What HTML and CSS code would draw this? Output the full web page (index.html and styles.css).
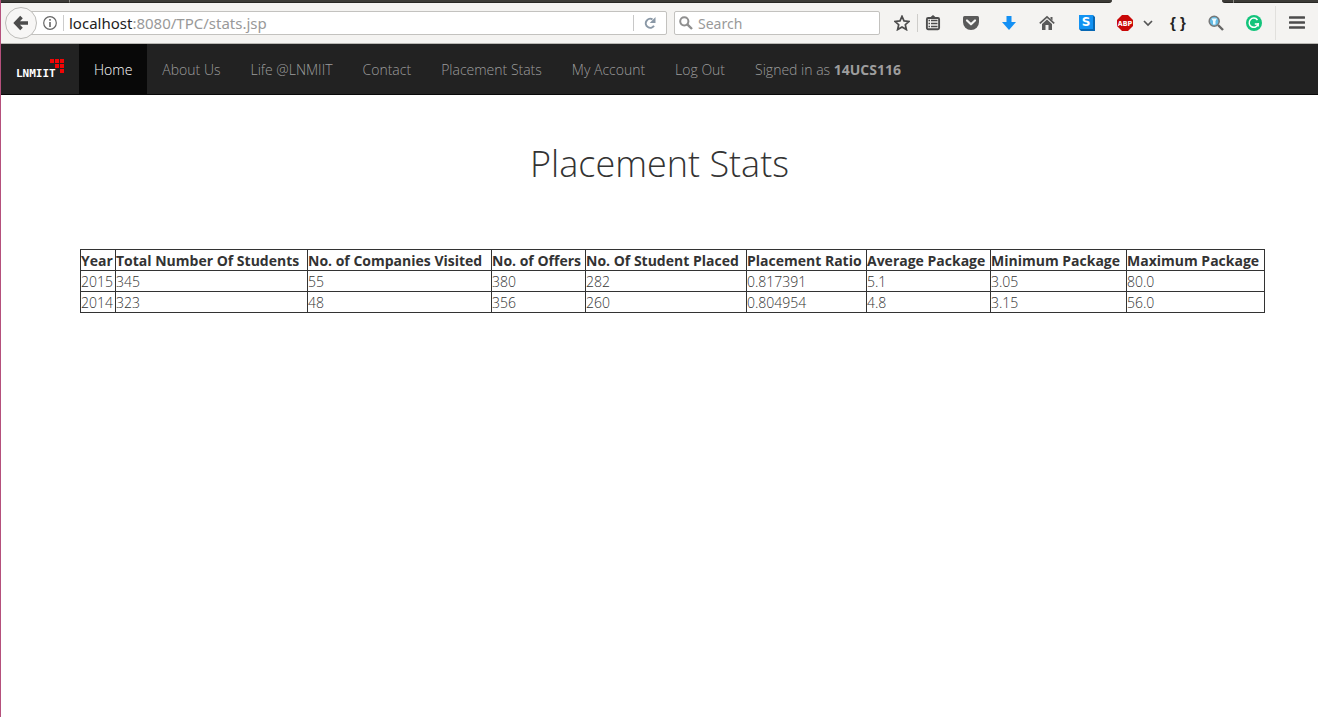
FILE: index.html
```html
<!DOCTYPE html>
<html lang="en">
<head>
<meta charset="utf-8">
<title>Placement Stats</title>
<link rel="stylesheet" href="styles.css">
</head>
<body>
<div class="window">
  <div class="tabs"><span class="tab-first"></span><span class="tab-middle"></span><span class="tab-active"></span><span class="tab-gap"></span><span class="tab-end"></span></div>
  <div class="toolbar">
    <form class="address">
      <button class="back" type="button" aria-label="Back"><svg width="16" height="16" viewBox="0 0 16 16"><path d="M8.500 2L2.800 8L8.500 14M3 8H15" fill="none" stroke="#4c4c4c" stroke-width="3.600"/></svg></button>
      <button class="info" type="button" aria-label="Site information"><svg width="14" height="14" viewBox="0 0 14 14"><circle cx="7" cy="7" r="6.300" fill="none" stroke="#666" stroke-width="1.200"/><path d="M7 6V11M7 3V4.700" stroke="#666" stroke-width="1.600"/></svg></button>
      <div class="url"><span class="host">localhost</span><span>:8080/TPC/stats.jsp</span></div>
      <button class="reload" type="button" aria-label="Reload"><svg width="12" height="12" viewBox="0 0 12 12"><path d="M8.500 2.300A4.500 4.500 0 1 0 10 8.800" fill="none" stroke="#8a98a6" stroke-width="2"/><path d="M11.500 0V6H5.700Z" fill="#8a98a6"/></svg></button>
    </form>
    <div class="search">
      <svg width="14" height="14" viewBox="0 0 14 14"><circle cx="5.300" cy="5.300" r="4.100" fill="none" stroke="#8f8f8f" stroke-width="2"/><path d="M8.300 8.300L13 13" stroke="#8f8f8f" stroke-width="2.400"/></svg>
      <input type="text" placeholder="Search" aria-label="Search">
    </div>
    <div class="tools">
      <button class="tool star" type="button" aria-label="Bookmark"><svg width="16" height="16" viewBox="0 0 16 16"><path d="M8 1.300L10 5.900L15 6.400L11.300 9.700L12.400 14.600L8 12L3.600 14.600L4.700 9.700L1 6.400L6 5.900Z" fill="none" stroke="#4c4c4c" stroke-width="1.700"/></svg></button>
      <button class="tool list" type="button" aria-label="Bookmarks list"><svg width="16" height="16" viewBox="0 0 16 16"><path d="M4.500 3L8 0L11.500 3Z" fill="#4c4c4c"/><rect x="1.900" y="3" width="12.200" height="11.200" rx="1.200" fill="none" stroke="#4c4c4c" stroke-width="1.900"/><path d="M3.500 5.500H5M6 5.500H12.500M3.500 8.500H5M6 8.500H12.500M3.500 11.500H5M6 11.500H12.500" stroke="#4c4c4c" stroke-width="1.500"/></svg></button>
      <button class="tool" type="button" aria-label="Pocket"><svg width="16" height="16" viewBox="0 0 16 16"><path d="M1.500 1H14.500Q16 1 16 2.500V7A8 8 0 0 1 0 7V2.500Q0 1 1.500 1Z" fill="#5a5a5a"/><path d="M4 5.500L8 9.300L12 5.500" fill="none" stroke="#f5f5f4" stroke-width="2.200" stroke-linecap="round" stroke-linejoin="round"/></svg></button>
      <button class="tool" type="button" aria-label="Downloads"><svg width="16" height="16" viewBox="0 0 16 16"><path d="M5.500 1H10.500V7H15L8 15L1 7H5.500Z" fill="#1390f4"/></svg></button>
      <button class="tool home" type="button" aria-label="Home page"><svg width="16" height="16" viewBox="0 0 16 16"><path d="M.8 8.400L8 1.800L15.200 8.400" fill="none" stroke="#5a5a5a" stroke-width="1.700"/><path d="M11.500 2H13.500V5.500L11.500 4ZM3 9L8 4.500L13 9V15H9.500V10H6.500V15H3Z" fill="#5a5a5a"/></svg></button>
      <button class="tool" type="button"><svg width="16" height="16" viewBox="0 0 16 16"><path d="M0 0H14L16 2V16H2L0 14Z" fill="#0868b4"/><path d="M0 0H14V14H0Z" fill="#1292f2"/><text x="7" y="11" text-anchor="middle" class="s-text">S</text></svg></button>
      <button class="tool" type="button"><svg width="16" height="16" viewBox="0 0 16 16"><path d="M5 0H11L16 5V11L11 16H5L0 11V5Z" fill="#c90808"/><text x="8" y="11" text-anchor="middle" class="abp-text">ABP</text></svg></button>
      <button class="tool chevron" type="button" aria-label="Ad blocker menu"><svg width="10" height="16" viewBox="0 0 10 16"><path d="M1 6L5 10L9 6" fill="none" stroke="#555" stroke-width="1.700"/></svg></button>
      <button class="tool code" type="button">{ }</button>
      <button class="tool" type="button" aria-label="Inspect"><svg width="16" height="16" viewBox="0 0 16 16"><path d="M10 10L15 15" stroke="#666" stroke-width="2.400"/><circle cx="6.200" cy="6.200" r="5" fill="#65bce5" stroke="#777" stroke-width="1.500"/><path d="M3.500 3.500H9L7.500 6V9.500H5V6Z" fill="#f1fbff"/></svg></button>
      <button class="tool" type="button" aria-label="Grammar"><svg width="16" height="16" viewBox="0 0 16 16"><circle cx="8" cy="8" r="8" fill="#12c47b"/><path d="M11.500 5A4.600 4.600 0 1 0 12.200 9H8.800M12.200 8V11.600" fill="none" stroke="#fff" stroke-width="1.500"/></svg></button>
      <button class="tool menu" type="button" aria-label="Open menu"><svg width="16" height="16" viewBox="0 0 16 16"><path d="M1 2.500H15M1 7.500H15M1 12.500H15" stroke="#4c4c4c" stroke-width="2.700" stroke-linecap="round"/></svg></button>
    </div>
  </div>
  <nav class="navbar">
    <a class="brand" href="#"><svg width="50" height="24" viewBox="0 0 50 24"><text x="1" y="19" class="logo-text">LNMIIT</text><path d="M35 1h4v4h-4zM40 1h4v4h-4zM45 1h4v4h-4zM40 6h4v4h-4zM45 6h4v4h-4zM45 11h4v4h-4z" fill="#f20505"/></svg></a>
    <a class="link active" href="#">Home</a>
    <a class="link" href="#">About Us</a>
    <a class="link" href="#">Life @LNMIIT</a>
    <a class="link" href="#">Contact</a>
    <a class="link" href="#">Placement Stats</a>
    <a class="link" href="#">My Account</a>
    <a class="link" href="#">Log Out</a>
    <p class="link">Signed in as <b>14UCS116</b></p>
  </nav>
  <main class="content">
    <h1>Placement Stats</h1>
    <table>
      <colgroup><col class="c-year"><col class="c-total"><col class="c-visited"><col class="c-offers"><col class="c-placed"><col class="c-ratio"><col class="c-avg"><col class="c-min"><col class="c-max"></colgroup>
      <thead><tr><th>Year</th><th>Total Number Of Students</th><th>No. of Companies Visited</th><th>No. of Offers</th><th>No. Of Student Placed</th><th>Placement Ratio</th><th>Average Package</th><th>Minimum Package</th><th>Maximum Package</th></tr></thead>
      <tbody>
        <tr><td>2015</td><td>345</td><td>55</td><td>380</td><td>282</td><td>0.817391</td><td>5.1</td><td>3.05</td><td>80.0</td></tr>
        <tr><td>2014</td><td>323</td><td>48</td><td>356</td><td>260</td><td>0.804954</td><td>4.8</td><td>3.15</td><td>56.0</td></tr>
      </tbody>
    </table>
  </main>
</div>
</body>
</html>
```
FILE: styles.css
```css
* { box-sizing: border-box; }
body { margin: 0; background: #fff; color: #333; font: 300 14px/20px "Open Sans", "Noto Sans", sans-serif; }
button { border: 0; padding: 0; background: none; display: flex; align-items: center; justify-content: center; }
svg { display: block; }
.window { min-height: 100vh; border-left: 1px solid #b5507c; }

/* Browser chrome */
.tabs { display: flex; height: 3px; background: #f4f3f1; }
.tabs span { background: #3c3b37; border-bottom: 1px solid #282724; }
.tab-first { width: 69px; border-right: 1px solid #8a8984; }
.tab-middle { flex: 1; border-radius: 0 0 6px 0; }
.tabs .tab-active { width: 110px; background: none; border: 0; }
.tab-gap { width: 12px; border-right: 1px solid #8a8984; border-radius: 0 0 0 6px; }
.tab-end { width: 84px; }
.toolbar { display: flex; align-items: center; height: 41px; padding-left: 4px; background: #f4f3f1; border-bottom: 1px solid #b9b8b4; font-family: "Noto Sans", sans-serif; font-weight: 400; font-size: 14px; }
.address { display: flex; flex: 1; align-items: center; height: 24px; margin-left: 14px; background: #fff; border: 1px solid #c3c2bf; border-radius: 2px; }
.back { flex: none; width: 32px; height: 32px; margin-left: -15px; background: #f7f6f5; border: 1px solid #bdbcb9; border-radius: 50%; }
.info { width: 26px; }
.url { flex: 1; padding-left: 5px; border-left: 1px solid #ccc; font-size: 15px; line-height: 16px; color: #999; white-space: nowrap; }
.host { color: #222; }
.reload { width: 33px; height: 16px; border-left: 1px solid #c8c8c8; }
.search { display: flex; align-items: center; gap: 5px; width: 206px; height: 24px; margin-left: 7px; padding: 0 4px; background: #fff; border: 1px solid #c3c2bf; border-radius: 2px; }
.search input { flex: 1; min-width: 0; height: 22px; border: 0; padding: 0; background: none; font: inherit; color: #333; }
.search input::placeholder { color: #999; opacity: 1; }
.tools { display: flex; align-items: center; margin-left: 7px; }
.tool { width: 38px; height: 18px; }
.tool.star { width: 31px; border-right: 1px solid #cecdca; }
.tool.list { width: 30px; margin-right: 4px; }
.tool.home { margin-right: 2px; }
.tool.chevron { width: 10px; margin: 0 6px 0 -1px; }
.tool.code { font: 700 15px/16px "Liberation Sans", sans-serif; color: #222; }
.tool.menu { width: 43px; height: 34px; margin-left: 2px; border-left: 1px solid #e1e0dd; }
.s-text { font: 700 12px "DejaVu Sans", sans-serif; fill: #fff; }
.abp-text { font: 700 7px "DejaVu Sans Condensed", "DejaVu Sans", sans-serif; fill: #fff; }

/* Site navigation */
.navbar { display: flex; height: 51px; background: #222; border-bottom: 1px solid #080808; }
.brand { width: 78px; padding: 14px; }
.logo-text { font: 700 11px "DejaVu Sans Mono", monospace; fill: #fff; }
.link { margin: 0; padding: 16px 15px 14px; line-height: 20px; color: #9d9d9d; text-decoration: none; white-space: nowrap; }
.link.active { color: #fff; background: #080808; }
.link b { font-weight: 700; }

/* Placement figures */
h1 { margin: 0; font-weight: 300; font-size: 36px; line-height: 40px; text-align: center; }
.content { padding: 49px 0; }
table { margin: 65px 0 0 79px; border-collapse: collapse; table-layout: fixed; width: 90%; }
th, td { border: 1px solid #333; padding: 2px 0 0; text-align: left; line-height: 18px; white-space: nowrap; }
th { font-weight: 700; }
.c-year { width: 35px; }
.c-total { width: 192px; }
.c-visited { width: 184px; }
.c-offers { width: 94px; }
.c-placed { width: 161px; }
.c-ratio { width: 120px; }
.c-avg { width: 124px; }
.c-min { width: 136px; }
```
